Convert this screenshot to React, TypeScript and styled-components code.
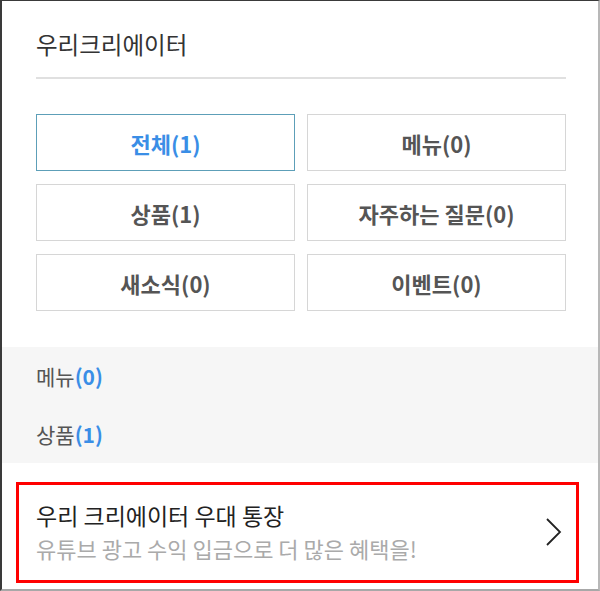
import styled, {createGlobalStyle} from 'styled-components';

const GlobalStyle = createGlobalStyle`
  html, body {
    margin: 0;
    padding: 0;
    background: #fff;
  }
  body {
    font-family: "Noto Sans CJK KR", "Noto Sans", sans-serif;
    color: #333;
  }
`;

interface ICategory {
  name: string;
  count: number;
}

const CATEGORIES: ICategory[] = [
  {name: '전체', count: 1},
  {name: '메뉴', count: 0},
  {name: '상품', count: 1},
  {name: '자주하는 질문', count: 0},
  {name: '새소식', count: 0},
  {name: '이벤트', count: 0}
];

const RESULTS: ICategory[] = [
  {name: '메뉴', count: 0},
  {name: '상품', count: 1}
];

const Frame = styled.div`
  box-sizing: border-box;
  width: 600px;
  height: 591px;
  border-top: 1px solid #3a3a3a;
  border-left: 2px solid #3a3a3a;
  border-right: 2px solid #b8b8b8;
  border-bottom: 2px solid #a8a8a8;
  background: #fff;
  overflow: hidden;
  display: flex;
  flex-direction: column;
`;

const Header = styled.div`
  padding: 28px 32px 0 34px;
`;

const Title = styled.h1`
  margin: 0;
  font-size: 23.5px;
  line-height: 30px;
  font-weight: 400;
  color: #333;
`;

const Divider = styled.hr`
  margin: 18px 0 0;
  border: 0;
  height: 2px;
  background: #e0e0e0;
`;

const TabGrid = styled.div`
  display: grid;
  grid-template-columns: 1fr 1fr;
  grid-auto-rows: 57px;
  column-gap: 12px;
  row-gap: 13px;
  margin-top: 35px;
`;

const Tab = styled.button<{$active?: boolean}>`
  box-sizing: border-box;
  display: flex;
  align-items: center;
  justify-content: center;
  background: #fff;
  border: 1px solid ${p => (p.$active ? '#5d9fb8' : '#d6d6d6')};
  font-family: inherit;
  font-size: 22px;
  font-weight: 700;
  color: ${p => (p.$active ? '#3a8ee6' : '#555')};
  padding: 0;
  cursor: pointer;
`;

const ResultList = styled.ul`
  list-style: none;
  margin: 36px 0 0;
  padding: 0 34px;
  background: #f6f6f6;
`;

const ResultItem = styled.li`
  height: 58px;
  display: flex;
  align-items: center;
  font-size: 21px;
  color: #555;
`;

const Count = styled.span`
  color: #3a8ee6;
  font-weight: 700;
`;

const Banner = styled.a`
  box-sizing: border-box;
  margin: 19px 19px 0 14px;
  height: 101px;
  border: 3px solid #f00;
  display: flex;
  align-items: center;
  justify-content: space-between;
  padding: 0 14px 2px 17px;
  text-decoration: none;
`;

const BannerText = styled.div`
  display: flex;
  flex-direction: column;
`;

const BannerTitle = styled.strong`
  font-size: 23px;
  line-height: 33px;
  font-weight: 400;
  color: #222;
`;

const BannerSub = styled.span`
  font-size: 22px;
  line-height: 33px;
  color: #aaa;
`;

const Chevron = () => (
  <svg width="18" height="30" viewBox="0 0 18 30" fill="none">
    <path d="M3 2 L16 15 L3 28" stroke="#222" strokeWidth="1.8" />
  </svg>
);

const App = () => {
  return (
    <>
      <GlobalStyle />
      <Frame>
        <Header>
          <Title>우리크리에이터</Title>
          <Divider />
          <TabGrid>
            {CATEGORIES.map((cat, i) => (
              <Tab key={cat.name} $active={i === 0}>
                {cat.name}({cat.count})
              </Tab>
            ))}
          </TabGrid>
        </Header>
        <ResultList>
          {RESULTS.map(item => (
            <ResultItem key={item.name}>
              {item.name}
              <Count>({item.count})</Count>
            </ResultItem>
          ))}
        </ResultList>
        <Banner href="#">
          <BannerText>
            <BannerTitle>우리 크리에이터 우대 통장</BannerTitle>
            <BannerSub>유튜브 광고 수익 입금으로 더 많은 혜택을!</BannerSub>
          </BannerText>
          <Chevron />
        </Banner>
      </Frame>
    </>
  );
};

export default App;
